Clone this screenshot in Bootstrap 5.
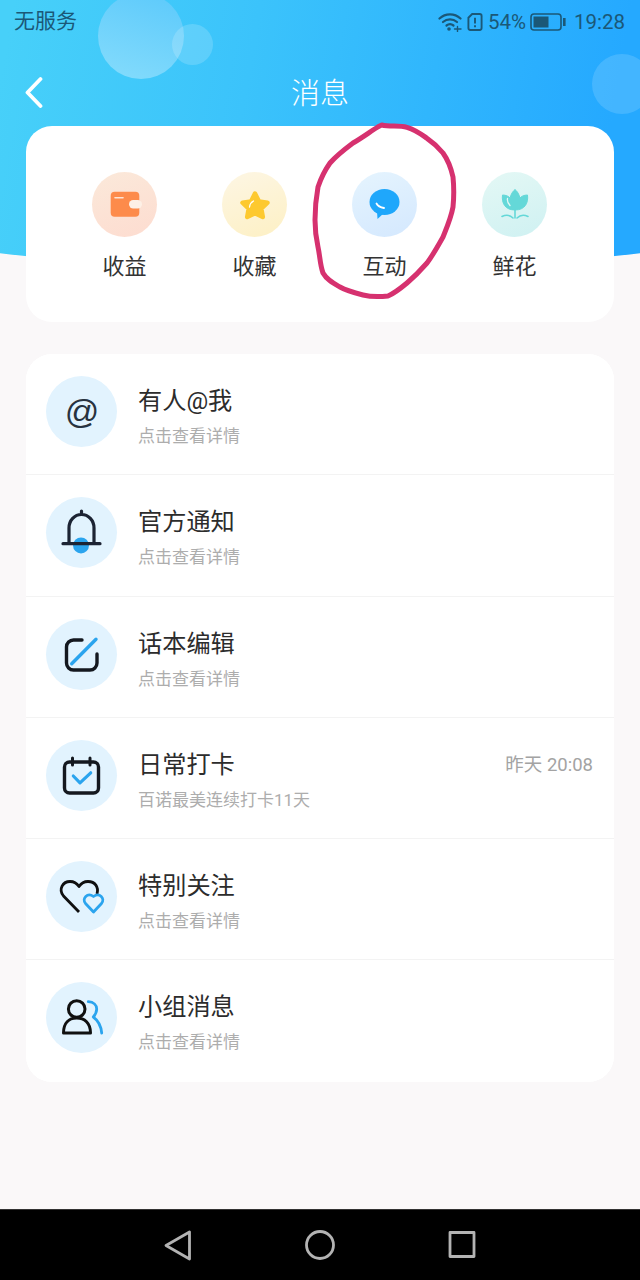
<!DOCTYPE html>
<html lang="zh-CN">
<head>
    <meta charset="UTF-8">
    <meta name="viewport" content="width=device-width, initial-scale=1.0">
    <title>消息</title>
    <link href="https://cdn.jsdelivr.net/npm/bootstrap@5.3.0/dist/css/bootstrap.min.css" rel="stylesheet">
    <style>
        html, body { width: 640px; height: 1280px; overflow: hidden; }
        body { background: #faf8f9; font-family: Roboto, "Noto Sans CJK SC", sans-serif; position: relative; }
        .screen { height: 1280px; position: relative; overflow: hidden; }
        .top-bg { position: absolute; left: 0; top: 0; width: 640px; height: 272px; clip-path: ellipse(900px 271px at 320px 0); background: linear-gradient(100deg, #47d0f9 2%, #3bc3fb 38%, #25a9ff 92%); }
        .bubble { position: absolute; border-radius: 50%; }
        .bubble-a { left: 98px; top: -7px; width: 86px; height: 86px; background: linear-gradient(200deg, #5bc9fb, #85dcfc); }
        .bubble-b { left: 172px; top: 24px; width: 41px; height: 41px; background: rgba(255,255,255,.17); }
        .bubble-c { left: 592px; top: 54px; width: 60px; height: 60px; background: rgba(255,255,255,.14); }
        .status-row { height: 44px; padding: 0 15px 0 14px; color: #1b5877; font-size: 20.5px; position: relative; }
        .status-cn { font-size: 21px; }
        .sim-icon { margin-left: 5px; margin-right: 5px; }
        .nav-row { height: 48px; margin-top: 24px; margin-bottom: 10px; position: relative; color: #fff; }
        .nav-side { width: 60px; padding-left: 24px; }
        .nav-title { font-size: 29px; font-weight: 300; padding-top: 5px; }
        .content-wrap { padding: 0 26px; position: relative; }
        .entry-card { border: 0; border-radius: 26px; height: 196px; padding: 46px 33px 0; }
        .entry-cell { width: 130px; }
        .entry-icon { width: 65px; height: 65px; border-radius: 50%; }
        .entry-a { background: linear-gradient(160deg, #fbe9da, #fddcd0); }
        .entry-b { background: linear-gradient(160deg, #fdf6e4, #fdf0c4); }
        .entry-c { background: linear-gradient(160deg, #e5f4fe, #d4e8fe); }
        .entry-d { background: linear-gradient(160deg, #e4f8f5, #cff1f2); }
        .entry-label { font-size: 22px; line-height: 30px; margin-top: 15px; padding-left: 1px; color: #333; }
        .msg-card { border: 0; border-radius: 26px; margin-top: 32px; overflow: hidden; }
        .msg-row { height: 121.3px; padding: 22px 21px 0 20px; border: 0; border-bottom: 2px solid #f3f3f3; }
        .msg-icon { width: 71px; height: 71px; border-radius: 50%; background: #e2f3fe; color: #27323f; font: italic 34px "Liberation Sans", sans-serif; }
        .msg-text { margin-left: 21px; padding-top: 9px; }
        .msg-title { font-size: 24.2px; line-height: 32px; color: #2c2c2c; }
        .msg-sub { font-size: 17px; line-height: 24px; margin-top: 7px; color: #adadad; }
        .msg-time { font-size: 18.5px; line-height: 32px; margin-top: 9px; color: #a3a3a3; }
        .sys-bar { position: absolute; left: 0; right: 0; bottom: 0; height: 71px; background: #000; gap: 112px; border-top: 1px solid #333; }
        .scribble { position: absolute; left: 0; top: 0; pointer-events: none; }
    </style>
</head>
<body>
<div class="screen">
    <div class="top-bg">
        <div class="bubble bubble-a"></div>
        <div class="bubble bubble-b"></div>
        <div class="bubble bubble-c"></div>
    </div>

    <div class="status-row d-flex align-items-center justify-content-between">
        <span class="status-cn">无服务</span>
        <div class="d-flex align-items-center">
            <svg width="24" height="20" viewBox="0 0 24 20" fill="none" stroke="#1b5877" stroke-width="2.200" stroke-linecap="round">
                <path d="M1.500 6.500C7.500 1 16.500 1 22.500 6.500"/><path d="M5 10C9 6.500 15 6.500 19 10"/><path d="M8.500 13.500C10.500 12 13.500 12 15.500 13.500"/>
                <circle cx="11" cy="17" r="1.800" fill="#1b5877" stroke="none"/><path d="M16.500 17H23M19.500 14.500V19.500" stroke-width="1.400"/>
            </svg>
            <svg class="sim-icon" width="16" height="20" viewBox="0 0 17 20" fill="none" stroke="#1b5877" stroke-width="2">
                <path d="M5.500 1.500H13.500A2 2 0 0 1 15.500 3.500V16.500A2 2 0 0 1 13.500 18.500H3.500A2 2 0 0 1 1.500 16.500V5.500Z"/>
                <path d="M8.500 5.500V11.500M8.500 13.500V15.500"/>
            </svg>
            <span>54%</span>
            <svg class="ms-1" width="36" height="18" viewBox="0 0 36 18" fill="none">
                <rect x="1" y="1" width="30" height="16" rx="3" stroke="#1b5877" stroke-width="1.600"/>
                <rect x="3.500" y="3.500" width="15" height="11" fill="#1b5877"/>
                <rect x="33" y="5" width="2.600" height="8" fill="#1b5877"/>
            </svg>
            <span class="ms-2">19:28</span>
        </div>
    </div>

    <div class="nav-row d-flex align-items-center justify-content-between">
        <div class="nav-side">
            <svg class="d-block" width="20" height="32" viewBox="0 0 20 32" fill="none" stroke="#fff" stroke-width="3.800" stroke-linecap="round" stroke-linejoin="round"><path d="M16.500 3L3.500 16.500L16.500 30"/></svg>
        </div>
        <div class="nav-title">消息</div>
        <div class="nav-side"></div>
    </div>

    <div class="content-wrap">
        <div class="card entry-card flex-row">
            <div class="entry-cell d-flex flex-column align-items-center">
                <div class="entry-icon entry-a">
                    <svg class="d-block" width="65" height="65" viewBox="0 0 65 65">
                        <rect x="18.700" y="19.700" width="28.600" height="25" rx="4" fill="#fd8b4b"/>
                        <rect x="37" y="28" width="13" height="8.500" rx="4.200" fill="#fdf0e6"/>
                        <path d="M23 25.700H31" stroke="#fde4d4" stroke-width="1.600" stroke-linecap="round"/>
                    </svg>
                </div>
                <div class="entry-label">收益</div>
            </div>
            <div class="entry-cell d-flex flex-column align-items-center">
                <div class="entry-icon entry-b">
                    <svg class="d-block" width="65" height="65" viewBox="0 0 65 65">
                        <path d="M33 21.500L37 29.500L45.500 30.700L39.300 36.700L40.800 45L33 41.200L25.200 45L26.700 36.700L20.500 30.700L29 29.500Z" fill="#fdc92f" stroke="#fdc92f" stroke-width="4.500" stroke-linejoin="round"/>
                        <path d="M27.500 35C28 31.500 29.500 30 31.500 29" fill="none" stroke="#fff" stroke-width="1.300" stroke-linecap="round"/>
                    </svg>
                </div>
                <div class="entry-label">收藏</div>
            </div>
            <div class="entry-cell d-flex flex-column align-items-center">
                <div class="entry-icon entry-c">
                    <svg class="d-block" width="65" height="65" viewBox="0 0 65 65">
                        <ellipse cx="32.500" cy="30" rx="15" ry="13" fill="#1fa7fb"/>
                        <path d="M25 39L25.500 47L32 41Z" fill="#1fa7fb"/>
                        <path d="M24.500 31.500C26 34.500 29 35.500 32 36" fill="none" stroke="#fff" stroke-width="1.800" stroke-linecap="round"/>
                    </svg>
                </div>
                <div class="entry-label">互动</div>
            </div>
            <div class="entry-cell d-flex flex-column align-items-center">
                <div class="entry-icon entry-d">
                    <svg class="d-block" width="65" height="65" viewBox="0 0 65 65">
                        <path d="M20.500 23C24 23 27 24.500 28 26C29 22 31 19 33 17.500C35 19 37 22 38 26C39 24.500 42 23 45.500 23C46.500 31 43 38 33 38C23 38 19.500 31 20.500 23Z" fill="#64d8d8" stroke="#64d8d8" stroke-linejoin="round"/>
                        <path d="M25.500 26.500C25 29.500 26 31.500 28 33.500" fill="none" stroke="#e4f8f5" stroke-width="1.300" stroke-linecap="round"/>
                        <path d="M20 44.500C24 42.500 28 43 31 46M46 44.500C42 42.500 38 43 35 46M33 38V46" fill="none" stroke="#64d8d8" stroke-width="1.600" stroke-linecap="round"/>
                    </svg>
                </div>
                <div class="entry-label">鲜花</div>
            </div>
        </div>

        <div class="card msg-card">
            <div class="list-group list-group-flush">
                <div class="list-group-item msg-row d-flex align-items-start">
                    <div class="msg-icon flex-shrink-0 d-flex align-items-center justify-content-center">@</div>
                    <div class="msg-text"><div class="msg-title">有人@我</div><div class="msg-sub">点击查看详情</div></div>
                </div>
                <div class="list-group-item msg-row d-flex align-items-start">
                    <div class="msg-icon flex-shrink-0">
                        <svg class="d-block" width="71" height="71" viewBox="0 0 71 71" fill="none">
                            <circle cx="35" cy="48.400" r="8" fill="#2ba4ee"/>
                            <path d="M23 46.500V31A12.500 13.500 0 0 1 48 31V46.500M35.500 14V17.500M17 46.700H54" stroke="#1c2333" stroke-width="3.200" stroke-linecap="round"/>
                        </svg>
                    </div>
                    <div class="msg-text"><div class="msg-title">官方通知</div><div class="msg-sub">点击查看详情</div></div>
                </div>
                <div class="list-group-item msg-row d-flex align-items-start">
                    <div class="msg-icon flex-shrink-0">
                        <svg class="d-block" width="71" height="71" viewBox="0 0 71 71" fill="none" stroke-linecap="round">
                            <path d="M36 21H27.500A7 7 0 0 0 20.500 28V44A7 7 0 0 0 27.500 51H44A7 7 0 0 0 51 44V35" stroke="#14181f" stroke-width="3.400"/>
                            <path d="M25.700 44.700L50 20.300" stroke="#2ba4ee" stroke-width="3.400"/>
                        </svg>
                    </div>
                    <div class="msg-text"><div class="msg-title">话本编辑</div><div class="msg-sub">点击查看详情</div></div>
                </div>
                <div class="list-group-item msg-row d-flex align-items-start">
                    <div class="msg-icon flex-shrink-0">
                        <svg class="d-block" width="71" height="71" viewBox="0 0 71 71" fill="none" stroke-linecap="round" stroke-linejoin="round">
                            <rect x="18.500" y="22" width="34" height="31" rx="5" stroke="#14181f" stroke-width="3.400"/>
                            <path d="M26.500 18V25M44 18V25" stroke="#14181f" stroke-width="3"/>
                            <path d="M27.300 36L34 42.800L44.700 32.800" stroke="#2ba4ee" stroke-width="3.200"/>
                        </svg>
                    </div>
                    <div class="msg-text"><div class="msg-title">日常打卡</div><div class="msg-sub">百诺最美连续打卡11天</div></div>
                    <div class="msg-time ms-auto">昨天 20:08</div>
                </div>
                <div class="list-group-item msg-row d-flex align-items-start">
                    <div class="msg-icon flex-shrink-0">
                        <svg class="d-block" width="71" height="71" viewBox="0 0 71 71" fill="none" stroke-linejoin="round">
                            <path d="M33 51L17.500 35C12 28 17 20.500 24 20.500C28 20.500 31 22.500 33 25.500C35 22.500 38 20.500 42 20.500C49 20.500 53 26 51 33" stroke="#101010" stroke-width="2.800"/>
                            <path d="M47.500 51L39.500 42.500C35.500 37.500 41.500 31 47.500 35.500C53.500 31 59.500 37.500 55.500 42.500Z" fill="#e2f3fe" stroke="#2ba4ee" stroke-width="2.800"/>
                        </svg>
                    </div>
                    <div class="msg-text"><div class="msg-title">特别关注</div><div class="msg-sub">点击查看详情</div></div>
                </div>
                <div class="list-group-item msg-row d-flex align-items-start">
                    <div class="msg-icon flex-shrink-0">
                        <svg class="d-block" width="71" height="71" viewBox="0 0 71 71" fill="none" stroke-linecap="round" stroke-linejoin="round">
                            <circle cx="30.700" cy="27" r="8.300" stroke="#101010" stroke-width="3"/>
                            <path d="M17.500 51C17.500 41 23 36 30.700 36C38.500 36 44.500 41 44.500 51Z" stroke="#101010" stroke-width="3"/>
                            <path d="M42.300 19.700C47.500 20 50.700 23 50.700 27C50.700 30.500 49 33 47.300 35C51.500 38 55 43.500 55.700 51" stroke="#2ba4ee" stroke-width="2.800"/>
                        </svg>
                    </div>
                    <div class="msg-text"><div class="msg-title">小组消息</div><div class="msg-sub">点击查看详情</div></div>
                </div>
            </div>
        </div>
    </div>

    <svg class="scribble" width="640" height="340" viewBox="0 0 640 340" fill="none">
        <path d="M381.700 125C390 127 399 125 407 127.300C416 130 421 134 427 138.300C434 143 439 148 443 153C448 160 451 168 453 177C454 187 454 197 453 207C451 218 447 227 443 237C438 246 433 255 427 263C420 271 414 277 407 283C401 288 395 293 388 296C379 297 371 297 363 295C355 293 347 291 340 287C333 283 327 280 323 273C320 265 320 256 318 247C316 238 315 229 315 220C315 209 316 198 318 187C321 178 325 170 330 163C337 155 345 149 353 143C360 139 367 134 373 130C376 128 379 126 381.700 125Z" stroke="#d6316f" stroke-width="5" stroke-linejoin="round"/>
    </svg>

    <div class="sys-bar d-flex align-items-center justify-content-center">
        <svg width="30" height="32" viewBox="0 0 30 32" fill="none" stroke="#b3b3b3" stroke-width="2.800" stroke-linejoin="round"><path d="M26.500 3V30L3 16.500Z"/></svg>
        <svg width="30" height="32" viewBox="0 0 30 32" fill="none" stroke="#b3b3b3" stroke-width="2.800"><circle cx="15" cy="16" r="13.500"/></svg>
        <svg width="30" height="32" viewBox="0 0 30 32" fill="none" stroke="#b3b3b3" stroke-width="2.800" stroke-linejoin="round"><rect x="3" y="3.500" width="24" height="24"/></svg>
    </div>
</div>
<script src="https://cdn.jsdelivr.net/npm/bootstrap@5.3.0/dist/js/bootstrap.bundle.min.js"></script>
</body>
</html>
